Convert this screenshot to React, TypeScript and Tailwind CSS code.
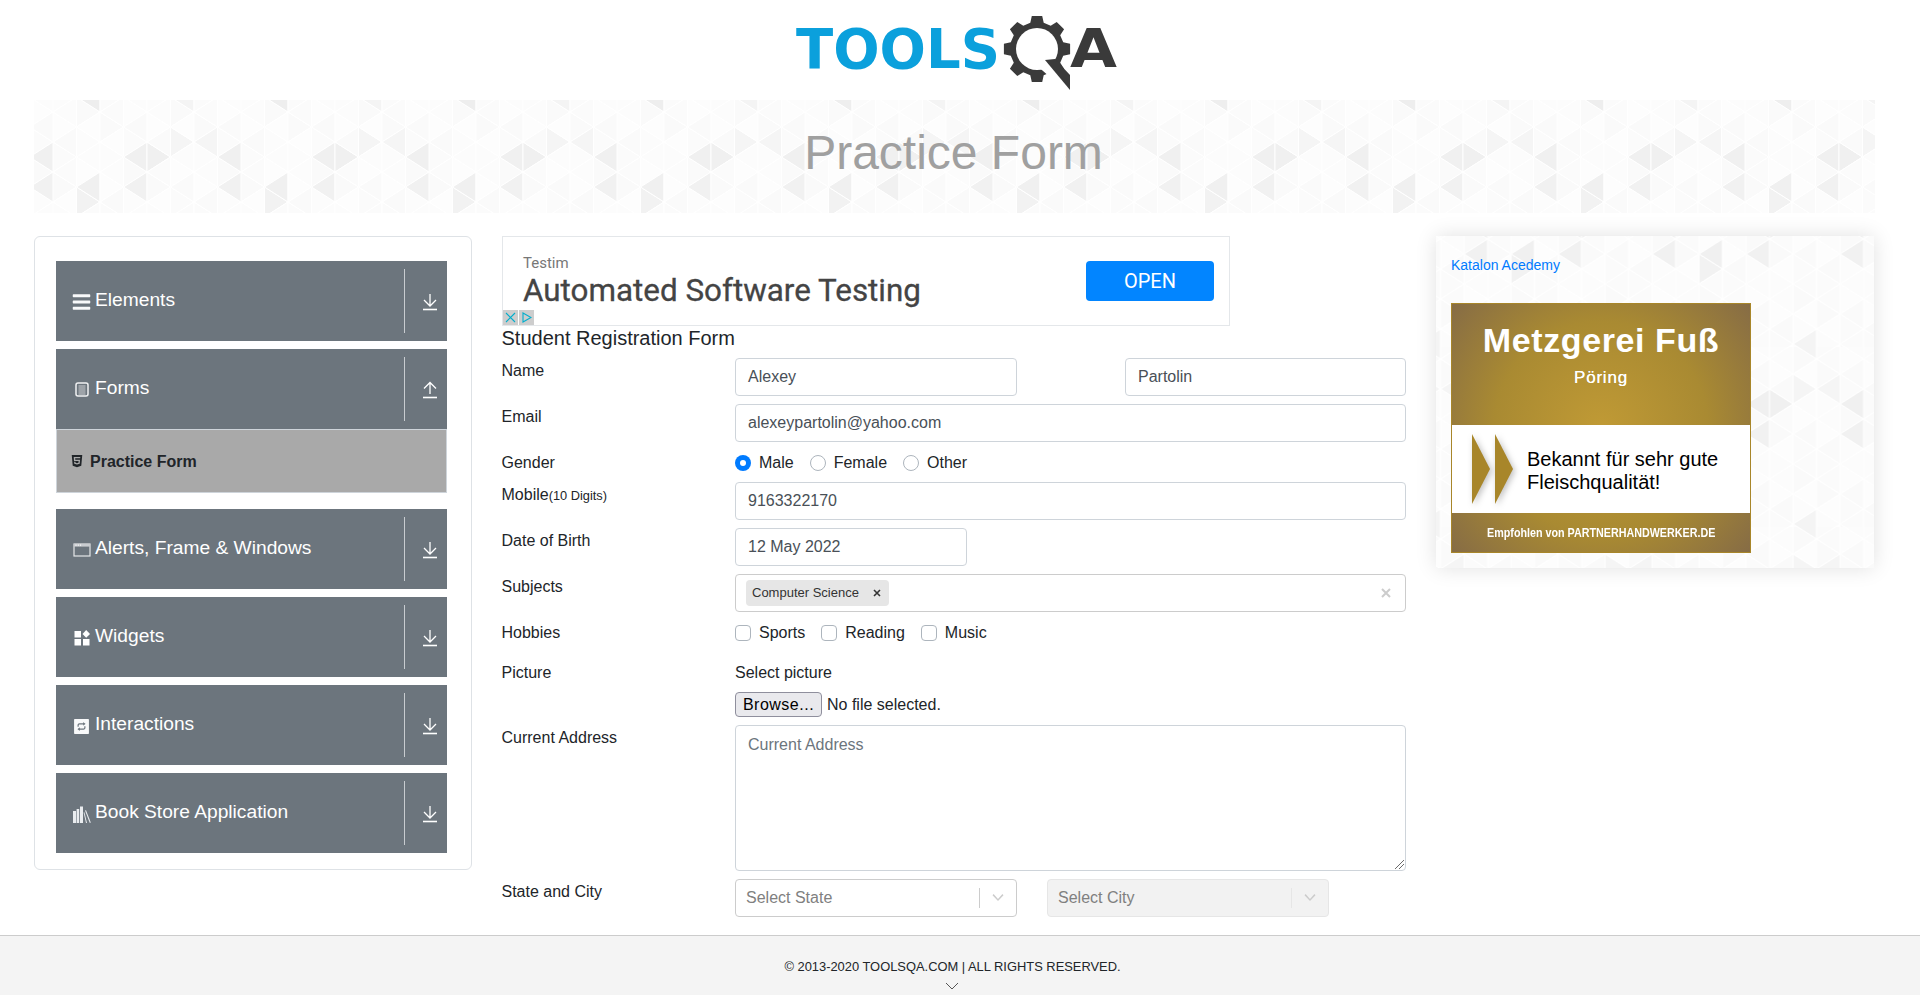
import React from "react";
import { FaBars, FaHtml5 } from "react-icons/fa";
import { AiFillInteraction } from "react-icons/ai";

const tileDark: Record<string, string> = {
  "L3,1": "#f0f0f0",
  "R4,1": "#f0f0f0",
  "L7,1": "#f0f0f0",
  "L7,2": "#f1f1f1",
  "L1,2": "#f0f0f0",
  "L3,2": "#f1f1f1",
  "R1,2": "#f2f2f2",
  "R5,0": "#f5f5f5",
  "L6,1": "#f5f5f5",
  "L1,-1": "#eeeeee",
  "L5,-1": "#f4f4f4",
  "L1,5": "#eeeeee",
  "L5,5": "#f4f4f4",
};

// soft triangle texture used behind the title and the side panel
const Triangles = ({ id, dx, dy }: { id: string; dx: number; dy: number }) => {
  const colW = 23.5;
  const v = (k: number, j: number) => (k % 2 === 0 ? 12 + 30 * j : 27 + 30 * j);
  const polys: { points: string; fill: string }[] = [];
  for (let k = 0; k < 8; k++) {
    for (let j = -1; j < 6; j++) {
      const x0 = k * colW;
      const x1 = (k + 1) * colW;
      const a = v(k, j);
      const b = k % 2 === 0 ? v(k + 1, j) : v(k + 1, j + 1);
      const c = k % 2 === 0 ? v(k + 1, j - 1) : v(k + 1, j);
      const shade = ["#fdfdfd", "#fbfbfb", "#fafafa", "#fcfcfc"];
      polys.push({
        points: `${x0},${a} ${x0},${a + 30} ${x1},${b}`,
        fill: tileDark[`R${k},${j}`] ?? shade[(k * 3 + j * 5 + 20) % 4],
      });
      polys.push({
        points: `${x0},${a} ${x1},${c} ${x1},${c + 30}`,
        fill: tileDark[`L${k},${j}`] ?? shade[(k * 5 + j * 7 + 23) % 4],
      });
    }
  }
  return (
    <svg className="absolute inset-0 w-full h-full" aria-hidden="true">
      <defs>
        <pattern
          id={id}
          width="188"
          height="180"
          patternUnits="userSpaceOnUse"
          patternTransform={`translate(${dx} ${dy})`}
        >
          {polys.map((p, i) => (
            <polygon key={i} points={p.points} fill={p.fill} stroke="#ffffff" strokeWidth="1" />
          ))}
        </pattern>
      </defs>
      <rect width="100%" height="100%" fill={`url(#${id})`} />
    </svg>
  );
};

const gearPath = () => {
  const cx = 1037 - 790;
  const cy = 49;
  const teeth = 8;
  const pts: string[] = [];
  for (let i = 0; i < teeth; i++) {
    const t = (i / teeth) * Math.PI * 2 - Math.PI / 2;
    const w = (Math.PI * 2) / teeth;
    const pt = (r: number, a: number) =>
      `${(cx + r * Math.cos(a)).toFixed(1)},${(cy + r * Math.sin(a)).toFixed(1)}`;
    pts.push(pt(27, t - w * 0.32), pt(33.5, t - w * 0.2), pt(33.5, t + w * 0.2), pt(27, t + w * 0.32));
  }
  return `M${pts.join(" L")} Z`;
};

const Logo = () => (
  <svg width="340" height="100" viewBox="0 0 340 100" className="block">
    <text
      x="6"
      y="68"
      fontFamily="'DejaVu Sans', sans-serif"
      fontWeight="700"
      fontSize="56"
      fill="#0ba0dc"
      textLength="204"
      lengthAdjust="spacingAndGlyphs"
    >
      TOOLS
    </text>
    <path d={gearPath()} fill="#3a3a3a" />
    <circle cx="247" cy="49" r="21" fill="#ffffff" />
    <polygon points="245,62 258,57 277,76 277,90" fill="#ffffff" stroke="#ffffff" strokeWidth="3" />
    <polygon points="255,60 265,59 280,75 280,90" fill="#3a3a3a" />
    <text
      x="280"
      y="67"
      fontFamily="'DejaVu Sans', sans-serif"
      fontWeight="700"
      fontSize="54"
      fill="#3a3a3a"
      textLength="47"
      lengthAdjust="spacingAndGlyphs"
    >
      A
    </text>
  </svg>
);

const DownArrow = ({ up }: { up?: boolean }) => (
  <svg width="16" height="18" viewBox="0 0 16 18" fill="none" stroke="#ffffff" strokeWidth="1.3">
    <path d="M1 16.5H15" strokeWidth="1.6" />
    {up ? <path d="M8 13V2M2 7.5L8 1.5L14 7.5" /> : <path d="M8 1V12.5M2 7L8 13L14 7" />}
  </svg>
);

const FormsIcon = () => (
  <svg width="14" height="15" viewBox="0 0 14 15" fill="none">
    <rect x="1" y="1" width="12" height="13" rx="2" stroke="#f0f1f2" strokeWidth="1.5" />
    <path d="M3.5 4H10.5M3.5 6H10.5M3.5 8H10.5M3.5 10H10.5M3.5 12H10.5" stroke="#ced1d4" strokeWidth="1" />
  </svg>
);

const WindowIcon = () => (
  <svg width="18" height="14" viewBox="0 0 18 14" fill="none">
    <rect x="1" y="1" width="16" height="12" stroke="#e4e6e8" strokeWidth="1.2" />
    <rect x="1" y="1" width="16" height="2.6" fill="#c9ccd0" />
    <path d="M2.5 2.2H3.5M4.8 2.2H5.8M7.1 2.2H8.1" stroke="#ffffff" strokeWidth="1.2" />
  </svg>
);

const WidgetsIcon = () => (
  <svg width="16" height="16" viewBox="0 0 16 16" fill="#ffffff">
    <rect x="0.5" y="1" width="6.5" height="6.5" />
    <polygon points="12.2,0 16,3.9 12.2,7.8 8.5,3.9" />
    <rect x="0.5" y="9" width="6.5" height="6.5" />
    <rect x="9" y="9" width="6.5" height="6.5" />
  </svg>
);

const BooksIcon = () => (
  <svg width="18" height="17" viewBox="0 0 18 17" fill="#e9ecef">
    <rect x="0" y="5" width="3" height="12" />
    <rect x="3.6" y="3" width="2.6" height="14" />
    <rect x="7" y="0.5" width="3" height="16.5" />
    <path d="M12 4.5L13 4.2L17.8 16.6L16.8 17Z" />
    <path d="M10.6 6.5L11.4 6.2L14 17H13Z" />
  </svg>
);

const groups = [
  { name: "Elements", icon: <FaBars className="text-[20px]" />, iconClass: "mt-[1px]" },
  { name: "Forms", icon: <FormsIcon />, open: true, iconClass: "mt-[1px]" },
  { name: "Alerts, Frame & Windows", icon: <WindowIcon />, iconClass: "mt-[2px]" },
  { name: "Widgets", icon: <WidgetsIcon />, iconClass: "mt-[1px]" },
  { name: "Interactions", icon: <AiFillInteraction className="text-[19px]" />, iconClass: "mt-[2px]" },
  { name: "Book Store Application", icon: <BooksIcon />, iconClass: "mt-[2px]" },
];

const Sidebar = () => (
  <div className="w-[438px] h-[634px] shrink-0 border border-[#dee2e6] rounded-md pl-[21px] pr-[24px] pt-6">
    {groups.map((g) => (
      <div key={g.name} className={g.open ? "mb-4" : "mb-2 last:mb-0"}>
        <div className="h-20 bg-[#6c757d] text-white flex items-center text-[19.2px]">
          <div className="w-4 shrink-0" />
          <div className={`w-[19px] flex justify-center shrink-0 text-[#f8f9fa] ${g.iconClass}`}>{g.icon}</div>
          <span className="ml-1 -mt-[2px]">{g.name}</span>
          <div className="ml-auto h-16 w-[43px] border-l border-[#c8ccd0] flex items-center justify-center pt-[1px] pl-[8px]">
            <DownArrow up={g.open} />
          </div>
        </div>
        {g.open && (
          <div className="h-16 bg-[#a9a9a9] border border-[#ced4da] flex items-center pl-[13px] gap-[6px] text-[#212529] font-bold text-base">
            <FaHtml5 className="text-[14px] text-[#212529] shrink-0" />
            <span className="pt-[2px]">Practice Form</span>
          </div>
        )}
      </div>
    ))}
  </div>
);

const Row = ({ label, small, children, h }: { label: string; small?: string; children: React.ReactNode; h: string }) => (
  <div className={`flex ${h}`}>
    <div className="w-[233px] shrink-0 leading-6 pt-[1px] -ml-[0.5px] mr-[0.5px]">
      {label}
      {small && <small className="text-[12.8px]">{small}</small>}
    </div>
    <div className="flex-1 min-w-0">{children}</div>
  </div>
);

const Input = ({ value, className }: { value: string; className: string }) => (
  <div className={`h-[38px] border border-[#ced4da] rounded px-3 flex items-center text-[#495057] bg-white ${className}`}>
    {value}
  </div>
);

const Radio = ({ label, on }: { label: string; on?: boolean }) => (
  <div className="flex items-center gap-2">
    {on ? (
      <span className="w-4 h-4 rounded-full bg-[#007bff] flex items-center justify-center">
        <span className="w-[6px] h-[6px] rounded-full bg-white" />
      </span>
    ) : (
      <span className="w-4 h-4 rounded-full border border-[#adb5bd] bg-white" />
    )}
    {label}
  </div>
);

const Check = ({ label }: { label: string }) => (
  <div className="flex items-center gap-2">
    <span className="w-4 h-4 rounded-[4px] border border-[#adb5bd] bg-white" />
    {label}
  </div>
);

const Select = ({ label, disabled }: { label: string; disabled?: boolean }) => (
  <div
    className={`w-[282px] h-[38px] rounded flex items-center pl-[10px] pr-[8px] border ${
      disabled ? "bg-[#f2f2f2] border-[#e6e6e6] text-[#808080]" : "bg-white border-[#cccccc] text-[#808080]"
    }`}
  >
    <span className="flex-1">{label}</span>
    <span className={`h-5 w-px ${disabled ? "bg-[#e6e6e6]" : "bg-[#cccccc]"}`} />
    <svg width="20" height="20" viewBox="0 0 20 20" className="ml-2" fill="#cccccc">
      <path d="M4.5 7.2L5.6 6.1L10 11L14.4 6.1L15.5 7.2L10 13Z" />
    </svg>
  </div>
);

const AdBanner = () => (
  <div className="relative w-[728px] h-[90px] border border-[#e4e7ea] flex items-center bg-white">
    <div className="pl-[20px] flex-1" style={{ fontFamily: "Roboto, sans-serif" }}>
      <div className="text-[15px] text-[#777777] leading-5">Testim</div>
      <div className="text-[31.4px] text-[#444444] leading-9 [-webkit-text-stroke:0.3px_#444444]">Automated Software Testing</div>
    </div>
    <div
      className="w-[128px] h-10 mr-[15px] bg-[#0285ff] text-white rounded text-[20px] flex items-center justify-center"
      style={{ fontFamily: "Roboto, sans-serif" }}
    >
      OPEN
    </div>
    <div className="absolute left-0 bottom-0 flex gap-px">
      <span className="w-[15px] h-[15px] bg-[#cdcdcd] flex items-center justify-center">
        <svg width="11" height="11" viewBox="0 0 11 11" fill="none" stroke="#00aecd" strokeWidth="1.1">
          <path d="M1 1L10 10M10 1L1 10" />
        </svg>
      </span>
      <span className="w-[15px] h-[15px] bg-[#cdcdcd] flex items-center justify-center">
        <svg width="11" height="11" viewBox="0 0 11 11" fill="none" stroke="#00aecd" strokeWidth="1.1">
          <path d="M2 1L10 5.5L2 10Z" />
        </svg>
      </span>
    </div>
  </div>
);

const FormPanel = () => (
  <div className="w-[905px] shrink-0 ml-[30px] text-[#212529] text-base">
    <AdBanner />
    <h5 className="text-[20px] leading-6 h-[32px] -ml-[0.5px]">Student Registration Form</h5>
    <Row label="Name" h="h-[46px]">
      <div className="flex justify-between w-[671px]">
        <Input value="Alexey" className="w-[282px]" />
        <Input value="Partolin" className="w-[281px]" />
      </div>
    </Row>
    <Row label="Email" h="h-[46px]">
      <Input value="alexeypartolin@yahoo.com" className="w-[671px]" />
    </Row>
    <Row label="Gender" h="h-[32px]">
      <div className="flex gap-4 leading-6 pt-[1px]">
        <Radio label="Male" on />
        <Radio label="Female" />
        <Radio label="Other" />
      </div>
    </Row>
    <Row label="Mobile" small="(10 Digits)" h="h-[46px]">
      <Input value="9163322170" className="w-[671px]" />
    </Row>
    <Row label="Date of Birth" h="h-[46px]">
      <Input value="12 May 2022" className="w-[232px]" />
    </Row>
    <Row label="Subjects" h="h-[46px]">
      <div className="w-[671px] h-[38px] border border-[#cccccc] rounded flex items-center pl-[10px] pr-[14px]">
        <div className="h-[26px] bg-[#e6e6e6] rounded-sm flex items-center pl-[6px] pr-[8px] gap-[14px] text-[#333333] text-[13px]">
          Computer Science
          <svg width="8" height="8" viewBox="0 0 8 8" stroke="#333333" strokeWidth="1.6">
            <path d="M1 1L7 7M7 1L1 7" />
          </svg>
        </div>
        <svg width="10" height="10" viewBox="0 0 10 10" stroke="#cccccc" strokeWidth="2" className="ml-auto">
          <path d="M1 1L9 9M9 1L1 9" />
        </svg>
      </div>
    </Row>
    <Row label="Hobbies" h="h-[40px]">
      <div className="flex gap-4 leading-6 pt-[1px]">
        <Check label="Sports" />
        <Check label="Reading" />
        <Check label="Music" />
      </div>
    </Row>
    <Row label="Picture" h="h-[65px]">
      <div className="leading-6 pt-[1px]">Select picture</div>
      <div className="flex items-center mt-[7px] gap-[5px]">
        <div className="w-[87px] h-[25px] bg-[#e9e9ed] border border-[#8f8f9d] rounded flex items-center justify-center text-[#000000] tracking-[0.5px]">
          Browse...
        </div>
        No file selected.
      </div>
    </Row>
    <Row label="Current Address" h="h-[154px]">
      <div className="relative w-[671px] h-[146px] border border-[#ced4da] rounded px-3 pt-[7px] text-[#6c757d] bg-white leading-6">
        Current Address
        <svg width="10" height="10" viewBox="0 0 10 10" className="absolute right-[1px] bottom-[1px]" stroke="#6b6b6b" strokeWidth="1">
          <path d="M1 10L10 1M5 10L10 5" />
        </svg>
      </div>
    </Row>
    <Row label="State and City" h="h-[38px]">
      <div className="flex gap-[30px]">
        <Select label="Select State" />
        <Select label="Select City" disabled />
      </div>
    </Row>
  </div>
);

const SideAd = () => (
  <div className="relative w-[438px] h-[332px] shrink-0 ml-[29px] shadow-[0_0_20px_rgba(0,0,0,0.12)]">
    <Triangles id="tri-panel" dx={51.6} dy={111} />
    <div className="relative pl-[15px] pt-[20px]">
      <div className="text-[14px] leading-[18px] text-[#007bff]">Katalon Acedemy</div>
      <div className="w-[300px] h-[250px] mt-[29px] border border-[#a8862a] bg-[radial-gradient(circle_at_50%_50%,#c09a35_0%,#a98a32_55%,#866c45_100%)] flex flex-col">
        <div className="h-[121px] text-white font-bold text-center">
          <div className="text-[34px] leading-9 pt-[18px] tracking-[0.6px]">Metzgerei Fuß</div>
          <div className="text-[17px] leading-5 mt-[10px] tracking-[0.8px] font-normal [text-shadow:0_0_0.5px_#fff]">Pöring</div>
        </div>
        <div className="h-[88px] bg-white flex items-center text-[20px] leading-[23px] text-black">
          <svg width="70" height="72" viewBox="0 0 70 72" className="ml-[20px] shrink-0 drop-shadow-[2px_2px_3px_rgba(0,0,0,0.25)]" fill="#a8862a">
            <polygon points="0,1 18,36 0,71" />
            <polygon points="23,1 41,36 23,71" />
          </svg>
          <div className="-ml-[15px] pt-1">
            Bekannt für sehr gute
            <br />
            Fleischqualität!
          </div>
        </div>
        <div className="flex-1 flex items-center justify-center text-white text-[13px] font-bold whitespace-nowrap">
          <span className="scale-x-[0.826]">Empfohlen von PARTNERHANDWERKER.DE</span>
        </div>
      </div>
    </div>
  </div>
);

export default function App() {
  return (
    <div className="min-h-[995px] bg-white flex flex-col" style={{ fontFamily: "'Liberation Sans', Arial, sans-serif" }}>
      <header className="h-[100px] flex justify-center">
        <Logo />
      </header>
      <div className="relative ml-[34px] mr-[45px] h-[113px] flex items-center justify-center">
        <Triangles id="tri-title" dx={19} dy={0} />
        <h1 className="relative text-[48px] leading-[58px] text-[#a0a0a0] mb-2 mr-[2px]">Practice Form</h1>
      </div>
      <main className="flex pl-[34px] mt-[23px] h-[699px]">
        <Sidebar />
        <FormPanel />
        <SideAd />
      </main>
      <footer className="h-[60px] bg-[#f4f4f4] border-t border-[#cccccc] pr-[15px] flex flex-col items-center text-[#212529]">
        <div className="text-[12.9px] mt-[21px] leading-[20px]">© 2013-2020 TOOLSQA.COM | ALL RIGHTS RESERVED.</div>
        <svg width="14" height="8" viewBox="0 0 14 8" fill="none" stroke="#555555" strokeWidth="1" className="mt-[5px] -ml-px">
          <path d="M1 1L7 7L13 1" />
        </svg>
      </footer>
    </div>
  );
}
